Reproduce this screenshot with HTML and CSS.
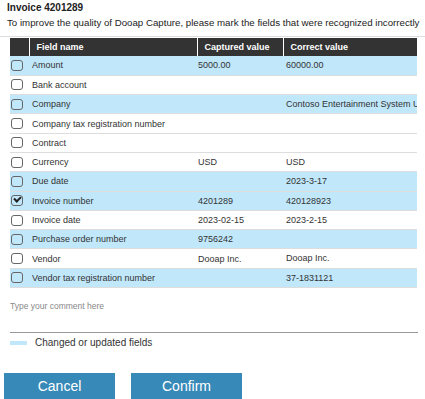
FILE: index.html
```html
<!DOCTYPE html>
<html lang="en">

<head>
    <meta charset="UTF-8">
    <meta name="viewport" content="width=device-width, initial-scale=1.0">
    <title>Invoice 4201289</title>
    <link rel="stylesheet" href="styles.css">
</head>

<body>
    <div class="head">
        <h1>Invoice 4201289</h1>
        <p>To improve the quality of Dooap Capture, please mark the fields that were recognized incorrectly</p>
    </div>

    <table class="fields">
        <colgroup>
            <col class="c-check">
            <col class="c-name">
            <col class="c-captured">
            <col class="c-correct">
        </colgroup>
        <thead>
            <tr>
                <th></th>
                <th>Field name</th>
                <th>Captured value</th>
                <th>Correct value</th>
            </tr>
        </thead>
        <tbody>
            <tr class="changed">
                <td><span class="box"></span></td>
                <td>Amount</td>
                <td>5000.00</td>
                <td class="fix">60000.00</td>
            </tr>
            <tr>
                <td><span class="box"></span></td>
                <td>Bank account</td>
                <td></td>
                <td class="fix"></td>
            </tr>
            <tr class="changed">
                <td><span class="box"></span></td>
                <td>Company</td>
                <td></td>
                <td class="fix">Contoso Entertainment System USA</td>
            </tr>
            <tr>
                <td><span class="box"></span></td>
                <td>Company tax registration number</td>
                <td></td>
                <td class="fix"></td>
            </tr>
            <tr>
                <td><span class="box"></span></td>
                <td>Contract</td>
                <td></td>
                <td class="fix"></td>
            </tr>
            <tr>
                <td><span class="box"></span></td>
                <td>Currency</td>
                <td>USD</td>
                <td class="fix">USD</td>
            </tr>
            <tr class="changed">
                <td><span class="box"></span></td>
                <td>Due date</td>
                <td></td>
                <td class="fix">2023-3-17</td>
            </tr>
            <tr class="changed">
                <td><span class="box checked"></span></td>
                <td>Invoice number</td>
                <td>4201289</td>
                <td class="fix">420128923</td>
            </tr>
            <tr>
                <td><span class="box"></span></td>
                <td>Invoice date</td>
                <td>2023-02-15</td>
                <td class="fix">2023-2-15</td>
            </tr>
            <tr class="changed">
                <td><span class="box"></span></td>
                <td>Purchase order number</td>
                <td>9756242</td>
                <td class="fix"></td>
            </tr>
            <tr>
                <td><span class="box"></span></td>
                <td>Vendor</td>
                <td>Dooap Inc.</td>
                <td class="fix">Dooap Inc.</td>
            </tr>
            <tr class="changed">
                <td><span class="box"></span></td>
                <td>Vendor tax registration number</td>
                <td></td>
                <td class="fix">37-1831121</td>
            </tr>
        </tbody>
    </table>

    <div class="comment">Type your comment here</div>

    <div class="legend">
        <span class="swatch"></span>
        <span>Changed or updated fields</span>
    </div>

    <div class="actions">
        <button class="btn">Cancel</button>
        <button class="btn">Confirm</button>
    </div>
</body>

</html>
```

FILE: styles.css
```css
body {
    margin: 0;
    padding: 0;
    font-family: "Liberation Sans", Arial, sans-serif;
    color: #333;
    background: white;
    overflow: hidden;
}

* {
    box-sizing: border-box;
}

.head {
    height: 37px;
    padding: 1px 0 0 7px;
    border-bottom: 1px solid #ddd;
}

.head h1 {
    margin: 0;
    font-size: 10px;
    line-height: 14px;
    font-weight: bold;
    color: #222;
}

.head p {
    margin: 1px 0 0;
    font-size: 9.7px;
    line-height: 14px;
    color: #222;
    white-space: nowrap;
}

.fields {
    margin: 1px 0 0 10px;
    width: 407px;
    border-collapse: collapse;
    table-layout: fixed;
    font-size: 9px;
}

.c-check {
    width: 19px;
}

.c-name {
    width: 168px;
}

.c-captured {
    width: 86px;
}

.c-correct {
    width: 134px;
}

th {
    height: 18px;
    padding: 0 0 0 7px;
    background: #333;
    color: white;
    font-weight: bold;
    text-align: left;
    border-left: 1px solid white;
}

th:first-child {
    border-left: 0;
}

td {
    height: 19.3px;
    padding: 0 0 0 3px;
    border-bottom: 1px solid #ddd;
    white-space: nowrap;
    overflow: hidden;
}

td:nth-child(3) {
    padding-left: 1px;
}

td.fix {
    padding-left: 3px;
    vertical-align: top;
    padding-top: 4px;
}

td:first-child {
    padding: 0 0 0 1px;
}

tr.changed td {
    background: #c1e7fb;
}

.box {
    display: block;
    width: 12px;
    height: 11px;
    border: 1.5px solid #666;
    border-radius: 3px;
    background: white;
    position: relative;
}

.changed .box {
    background: #c1e7fb;
}

.box.checked::after {
    content: "";
    position: absolute;
    left: 2px;
    top: 0;
    width: 5px;
    height: 3px;
    border-left: 2px solid #222;
    border-bottom: 2px solid #222;
    transform: rotate(-45deg);
}

.comment {
    margin: 13px 7px 0 10px;
    height: 32px;
    font-size: 8.5px;
    color: #888;
    border-bottom: 1px solid #999;
}

.legend {
    display: flex;
    align-items: center;
    gap: 8px;
    margin: 4px 0 0 10px;
    font-size: 10px;
    color: #333;
}

.swatch {
    width: 17px;
    height: 4px;
    background: #c1e7fb;
}

.actions {
    display: flex;
    gap: 16px;
    margin: 25px 0 0 4px;
}

.btn {
    width: 111px;
    height: 30px;
    border: 0;
    background: #3789b7;
    color: white;
    font-family: "Liberation Sans", Arial, sans-serif;
    font-size: 14px;
    padding: 0 0 4px;
}
```
